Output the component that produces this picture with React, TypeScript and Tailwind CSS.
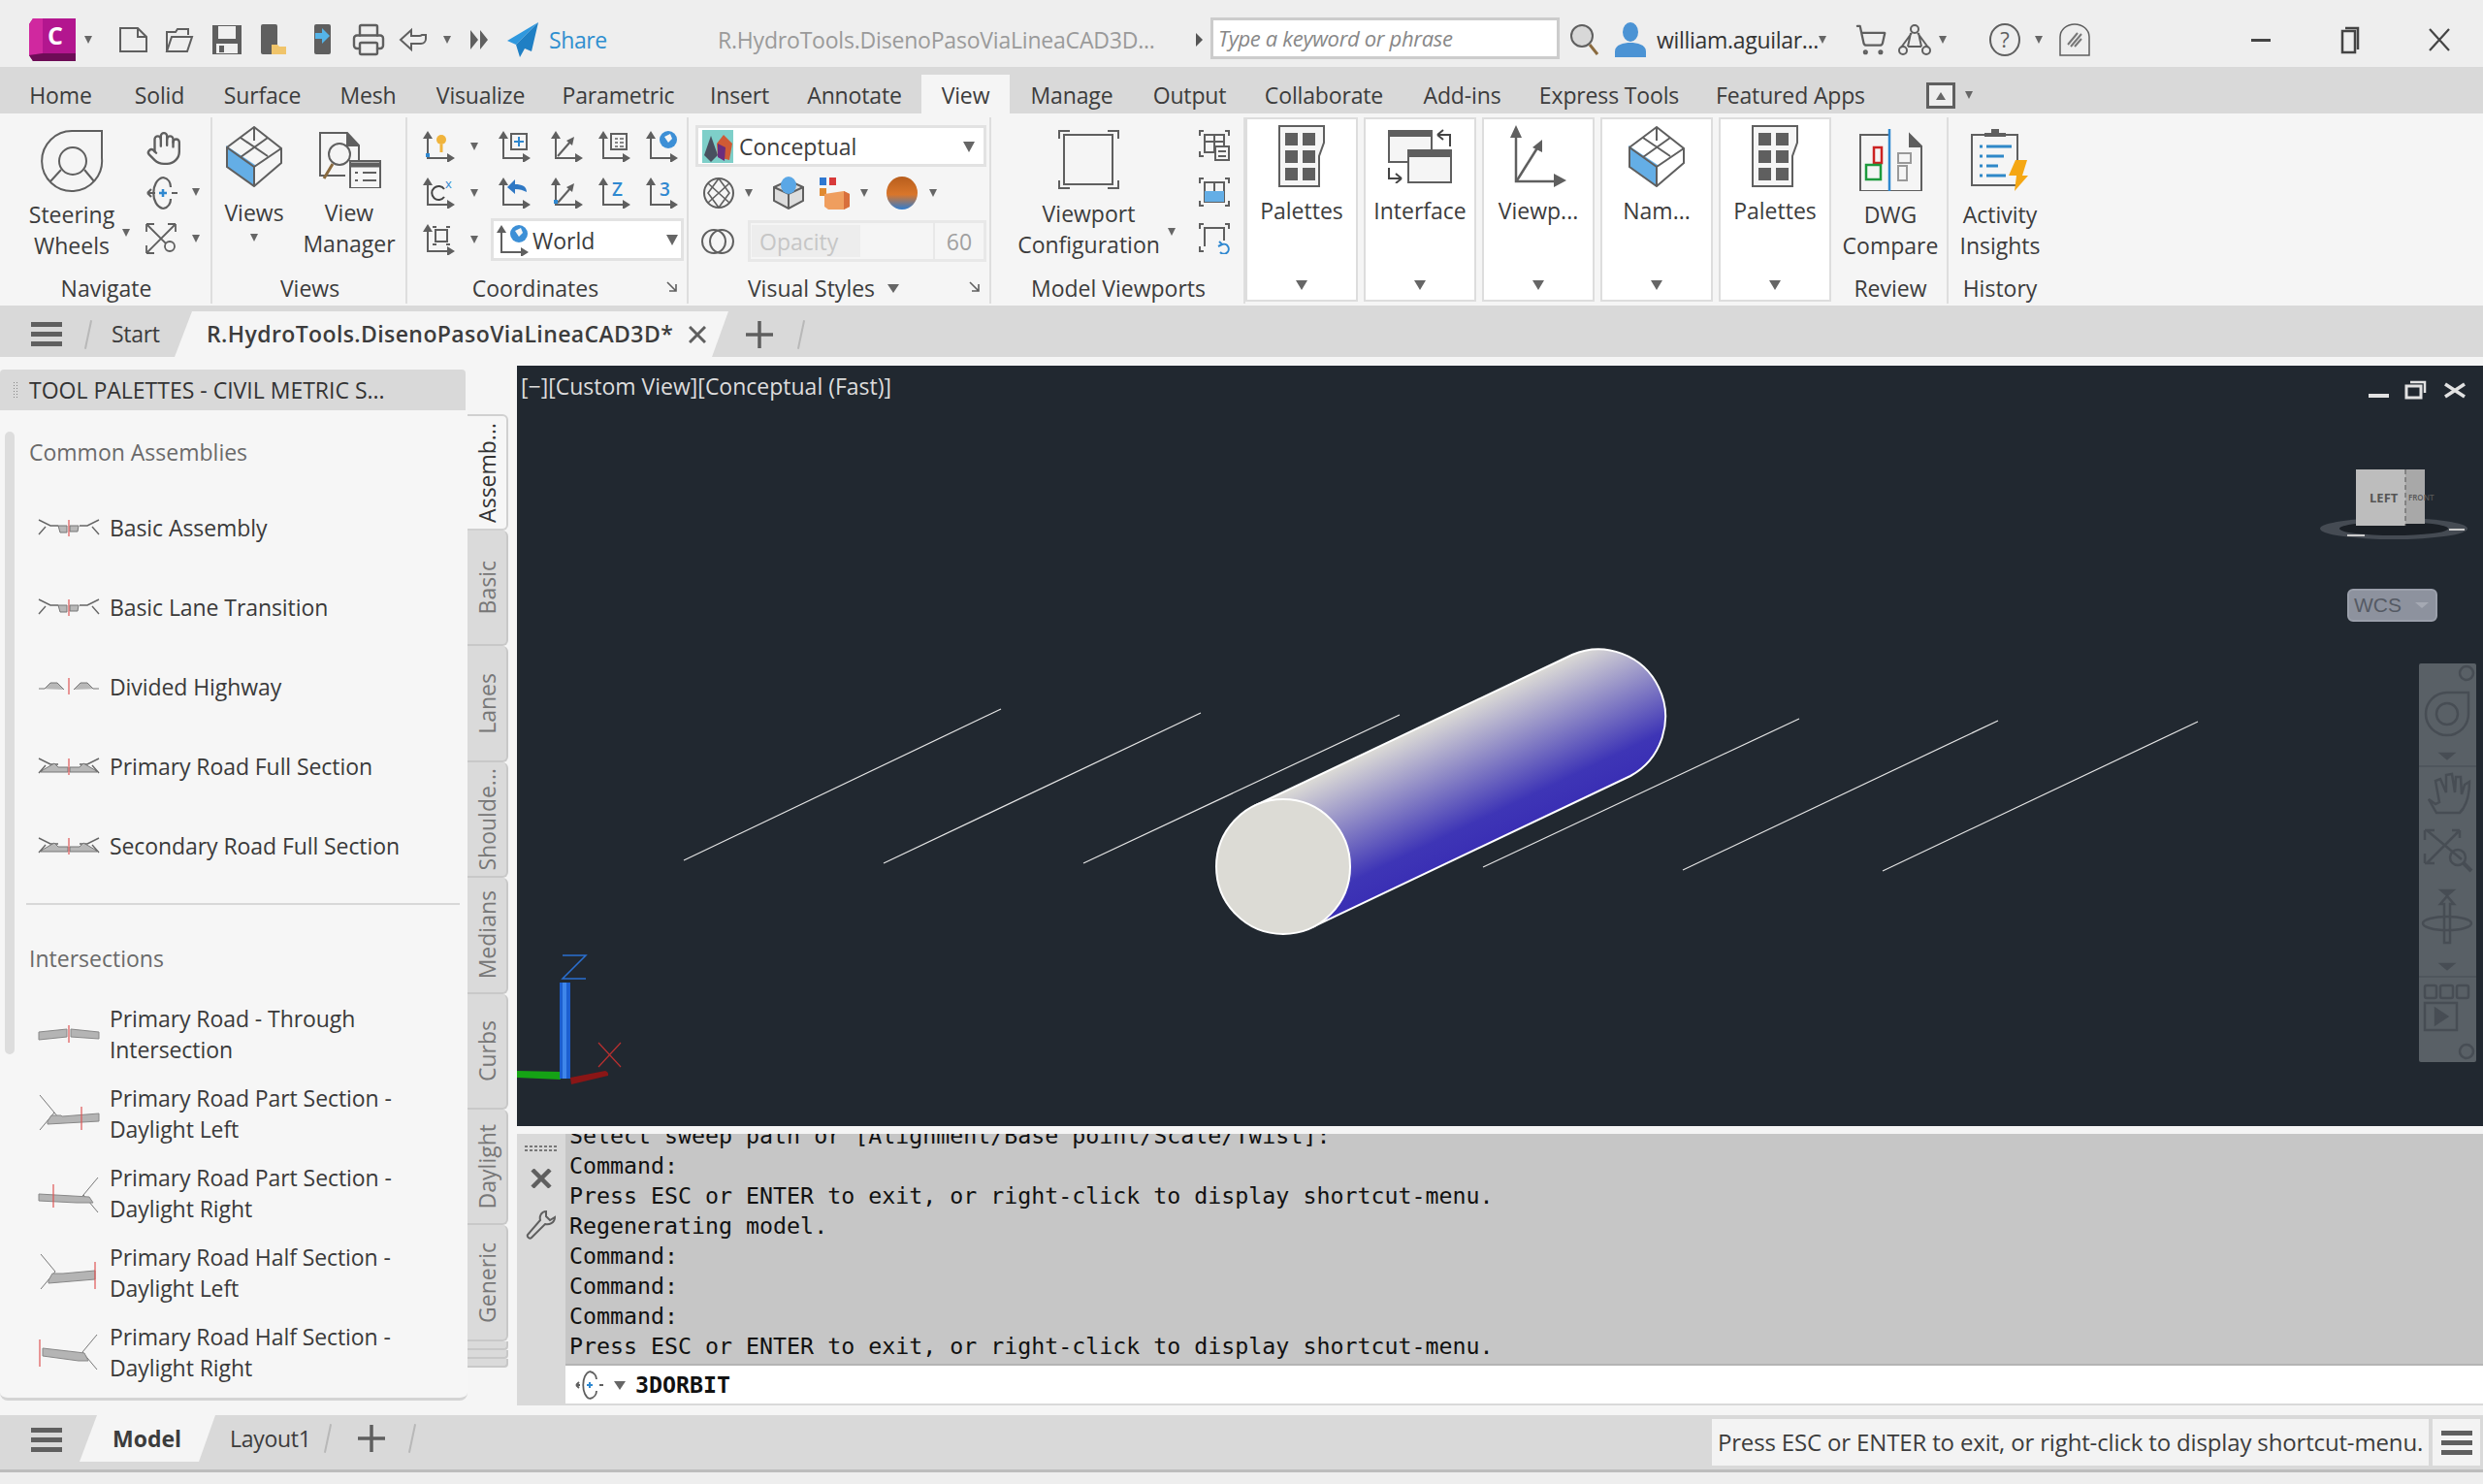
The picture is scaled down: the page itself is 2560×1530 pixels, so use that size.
import React from 'react';
import { Hand, ShoppingCart, Printer } from 'lucide-react';

const G = '#5f5f5f';

const Svg = ({ w, h, children }: { w: number; h: number; children?: React.ReactNode }) => (
  <svg width={w} height={h} viewBox={`0 0 ${w} ${h}`} fill="none" stroke={G} strokeWidth={2} className="shrink-0">
    {children}
  </svg>
);

const Caret = ({ className = '' }: { className?: string }) => (
  <div className={`w-0 h-0 shrink-0 border-x-[4px] border-t-[8px] border-x-transparent border-t-[#666666] ${className}`} />
);

const Burger = () => (
  <div className="w-[32px] flex flex-col gap-[5px] shrink-0">
    <div className="h-[5px] bg-[#5f5f5f]" />
    <div className="h-[5px] bg-[#5f5f5f]" />
    <div className="h-[5px] bg-[#5f5f5f]" />
  </div>
);

const Slash = ({ className = '' }: { className?: string }) => (
  <div className={`w-[2px] h-[30px] rotate-[12deg] bg-[#b8b8b8] shrink-0 ${className}`} />
);

const PlusSign = ({ className = '' }: { className?: string }) => (
  <svg width="30" height="30" viewBox="0 0 30 30" className={`shrink-0 ${className}`}>
    <path d="M15 1v28M1 15h28" stroke={G} strokeWidth="3.5" />
  </svg>
);

// title bar
const Logo = () => (
  <svg width="48" height="44" viewBox="0 0 48 44" className="shrink-0">
    <polygon points="4,0 48,0 48,44 4,44 0,38 0,6" fill="#b3168f" />
    <polygon points="0,6 4,0 14,0 14,36 0,38" fill="#d0289f" />
    <polygon points="0,38 14,36 48,36 48,44 4,44" fill="#6d0c56" />
    <text x="19" y="27" fontFamily="Open Sans" fontWeight="700" fontSize="25" fill="#ffffff">C</text>
  </svg>
);
const NewFile = () => (
  <Svg w={33} h={28}><path d="M3 2h18l9 9v15H3z" /><path d="M21 2v9h9" /></Svg>
);
const OpenFile = () => (
  <Svg w={30} h={28}><path d="M2 26V6h9l2-3h11v6" /><path d="M2 26l5-15h21l-5 15z" /></Svg>
);
const SaveIcon = () => (
  <svg width="32" height="32" viewBox="0 0 32 32" className="shrink-0">
    <path d="M1 1h30v30H1z" fill="#5f5f5f" />
    <rect x="7" y="2" width="18" height="13" fill="#f0f0f0" />
    <rect x="5" y="20" width="22" height="10" fill="#f0f0f0" />
    <rect x="8" y="22" width="5" height="7" fill="#5f5f5f" />
  </svg>
);
const Phone = ({ blue }: { blue?: boolean }) => (
  <svg width="30" height="32" viewBox="0 0 30 32" className="shrink-0">
    <rect x="2" y="0" width="17" height="31" rx="2" fill="#5f5f5f" />
    {blue ? (
      <path d="M3 9h7V4l8 8-8 8v-5H3z" fill="#55b4e8" />
    ) : (
      <path d="M13 21h6l2 2h7v8H13z" fill="#f0c46a" />
    )}
  </svg>
);
const Undo = () => (
  <Svg w={33} h={26}><path d="M14 3L3 13l11 10v-6h10a5 5 0 0 0 5-5V8h-4a4 4 0 0 1-3 1h-8z" /></Svg>
);
const Redo = () => (
  <svg width="20" height="22" viewBox="0 0 20 22" className="shrink-0">
    <path d="M1 1l8 10-8 10zM11 1l8 10-8 10z" fill="#5f5f5f" />
  </svg>
);
const ShareIcon = () => (
  <svg width="33" height="36" viewBox="0 0 33 36" className="shrink-0">
    <path d="M32 0L0 19l9 4z" fill="#2f98de" />
    <path d="M32 0L9 23l4 13 5-9 7 3z" fill="#1f7fc4" />
  </svg>
);
const SearchIcon = () => (
  <svg width="30" height="34" viewBox="0 0 30 34" fill="none" className="shrink-0">
    <circle cx="12" cy="13" r="11" fill="#d8d8d8" stroke={G} strokeWidth="2" />
    <path d="M20 22l8 10" stroke="#8a6a3e" strokeWidth="3" />
  </svg>
);
const UserIcon = () => (
  <svg width="34" height="36" viewBox="0 0 34 36" className="shrink-0">
    <ellipse cx="17" cy="10" rx="8" ry="10" fill="#4b93d4" />
    <path d="M1 36v-6c0-7 9-9 16-9s16 2 16 9v6z" fill="#4b93d4" />
  </svg>
);
const AutodeskA = () => (
  <Svg w={36} h={34}>
    <circle cx="18" cy="6" r="4" />
    <path d="M15 10L4 25M21 10l11 15M11 24h14M14 10l-3 14M22 10l3 14" />
    <circle cx="6" cy="28" r="4" />
    <circle cx="30" cy="28" r="4" />
  </Svg>
);
const HelpIcon = () => (
  <svg width="32" height="34" viewBox="0 0 32 34" fill="none" className="shrink-0">
    <ellipse cx="16" cy="17" rx="15" ry="16" stroke={G} strokeWidth="2" />
    <text x="16" y="25" textAnchor="middle" fontFamily="Open Sans" fontSize="22" fill={G}>?</text>
  </svg>
);
const StayIcon = () => (
  <Svg w={32} h={34}>
    <path d="M1 14a15 13 0 0 1 30 0v19H1z" strokeWidth="1.5" />
    <path d="M9 22l10-12M12 24l11-13M16 24l7-8" stroke="#777777" strokeWidth="2" />
  </Svg>
);

// ribbon large icons
const Wheel = () => (
  <Svg w={65} h={65}>
    <path d="M33 2h30v28A31 31 0 1 1 33 2z" />
    <circle cx="33" cy="33" r="14" />
    <path d="M21 42L10 54M45 42l10 12" />
  </Svg>
);
const Cube = ({ size = 60 }: { size?: number }) => (
  <svg width={size} height={size * 1.05} viewBox="0 0 60 63" fill="none" stroke={G} strokeWidth="2" className="shrink-0">
    <polygon points="1,20 31,40 31,62 1,42" fill="#64aee6" stroke="none" />
    <path d="M30 1L2 22v20l28 20 28-24V23zM30 1v14M2 22l28 20M58 23L30 42v20M16 12l28 19M44 12L16 32" />
  </svg>
);
const ViewManager = () => (
  <Svg w={65} h={58}>
    <path d="M42 36V14L30 1H2v44h26" />
    <path d="M30 1v13h12" fill="#5f5f5f" />
    <circle cx="22" cy="23" r="11" />
    <path d="M15 33L6 48" stroke="#8a6a3e" strokeWidth="3" />
    <rect x="33" y="30" width="31" height="28" fill="#f5f5f5" />
    <path d="M33 34h31" strokeWidth="5" />
    <path d="M38 42h3M46 42h14M38 50h3M46 50h14" />
  </Svg>
);
const Orbit = () => (
  <Svg w={34} h={34}>
    <path d="M18 1C5 4 5 30 18 33M18 1c6 1 8 6 8 10M18 33c6-1 8-6 8-10" strokeWidth="2.2" />
    <path d="M10 17H2m0 0l4-4m-4 4l4 4M27 17h6" strokeWidth="2.2" />
    <path d="M18 13v8M14 17h8" stroke="#2f88d0" strokeWidth="2.5" />
  </Svg>
);
const Viewport = () => (
  <Svg w={63} h={61}>
    <path d="M6 5h50v51H6z" />
    <path d="M12 1H1v8M51 1h11v8M12 60H1v-8M51 60h11v-8" />
  </Svg>
);
const SmallViewportA = () => (
  <Svg w={32} h={32}>
    <path d="M5 1H1v5M27 1h4v5M5 27H1v-5" />
    <rect x="6" y="5" width="20" height="18" />
    <path d="M16 5v18M6 12h20" />
    <rect x="17" y="17" width="14" height="14" fill="#f5f5f5" />
    <path d="M20 22h8M20 27h8" />
  </Svg>
);
const SmallViewportB = () => (
  <Svg w={32} h={30}>
    <path d="M5 1H1v5M27 1h4v5M5 29H1v-5M27 29h4v-5" />
    <rect x="6" y="5" width="20" height="20" />
    <rect x="17" y="14" width="9" height="11" fill="#64aee6" stroke="none" />
    <rect x="6" y="14" width="11" height="11" fill="#64aee6" stroke="none" />
    <path d="M16 5v9" />
  </Svg>
);
const SmallViewportC = () => (
  <Svg w={32} h={32}>
    <path d="M5 1H1v5M27 1h4v5M5 29H1v-5" />
    <path d="M6 24V5h20v13" />
    <path d="M24 22a5 5 0 1 1-2 8M24 22l-3-3M24 22l-4 2" stroke="#2f88d0" />
  </Svg>
);
const Palettes = () => (
  <svg width="48" height="64" viewBox="0 0 48 64" className="shrink-0">
    <path d="M1 1h46v17l-5 14v31H1z" fill="#f5f5f5" stroke={G} strokeWidth="2" />
    <path d="M7 8h13v13H7zM25 8h13v13H25zM7 26h13v13H7zM25 26h13v13H25zM7 44h13v13H7zM25 44h13v13H25z" fill="#5f5f5f" />
  </svg>
);
const InterfaceIcon = () => (
  <Svg w={66} h={56}>
    <rect x="1" y="2" width="44" height="32" fill="#f5f5f5" />
    <path d="M1 5h44" strokeWidth="6" />
    <rect x="21" y="22" width="44" height="33" fill="#f5f5f5" />
    <path d="M21 26h44" strokeWidth="6" />
    <path d="M64 18V6H51M51 6l6-5M51 6l6 5" stroke="#444444" />
    <path d="M1 40v11h13M14 51l-6-5M14 51l-6 5" stroke="#444444" />
  </Svg>
);
const ViewpointIcon = () => (
  <svg width="58" height="64" viewBox="0 0 58 64" fill="none" className="shrink-0">
    <path d="M6 10v48h44" stroke={G} strokeWidth="2.5" />
    <path d="M6 0l-6 13h12zM58 57l-13-7v14z" fill={G} />
    <path d="M7 57l22-35" stroke={G} strokeWidth="2.5" />
    <path d="M33 15l-10 8 10 5z" fill={G} />
  </svg>
);
const DwgCompare = () => (
  <Svg w={65} h={64}>
    <path d="M31 6H1v58h63V18L52 6v12h12" />
    <path d="M52 6l12 12H52z" fill="#5f5f5f" />
    <rect x="15" y="19" width="8" height="16" stroke="#cc2222" strokeWidth="2.5" fill="#f5f5f5" />
    <rect x="7" y="37" width="15" height="15" stroke="#1d9a3d" strokeWidth="2.5" fill="#f5f5f5" />
    <rect x="40" y="25" width="13" height="10" stroke="#999999" fill="#f5f5f5" />
    <rect x="40" y="38" width="9" height="15" stroke="#999999" fill="#f5f5f5" />
    <path d="M31 0v64" stroke="#2f88d0" strokeWidth="2.5" />
  </Svg>
);
const ActivityInsights = () => (
  <svg width="60" height="64" viewBox="0 0 60 64" fill="none" className="shrink-0">
    <path d="M1 6h47v52H1z" stroke={G} strokeWidth="2" fill="#f5f5f5" />
    <path d="M14 8V4h7V0h8v4h7v4z" fill={G} />
    <path d="M9 18h3M16 18h26M9 28h3M16 28h18M9 38h3M16 38h12M9 48h3M16 48h20" stroke="#2f88c8" strokeWidth="3" />
    <path d="M46 32h12l-5 16h6L45 64l2-16h-8z" fill="#f5a713" />
  </svg>
);

// small ucs icons, all share the two axes
const Ucs = ({ children }: { children?: React.ReactNode }) => (
  <svg width="36" height="32" viewBox="0 0 36 32" fill="none" className="shrink-0">
    <path d="M6 6v22h20" stroke={G} strokeWidth="2" />
    <path d="M6 0L1 8h10zM34 28l-8-5v10z" fill={G} />
    {children}
  </svg>
);
const Sq = () => <rect x="14" y="3" width="16" height="16" stroke={G} strokeWidth="2" fill="#f5f5f5" />;

const coordIcons = [
  <Ucs key="a"><circle cx="20" cy="9" r="5" fill="#f0b43c" /><path d="M20 14v8" stroke="#f0b43c" strokeWidth="3" /><rect x="4" y="23" width="4" height="4" fill="#2f88d0" /></Ucs>,
  <Ucs key="b"><Sq /><path d="M22 6v10M17 11h10" stroke="#2f88d0" strokeWidth="2" /></Ucs>,
  <Ucs key="c"><path d="M8 26L22 10" stroke={G} strokeWidth="2" /><path d="M25 6l-8 4 6 5z" fill={G} /></Ucs>,
  <Ucs key="d"><Sq /><path d="M18 8h3M23 8h4M18 12h3M23 12h4M18 16h3M23 16h4" stroke={G} strokeWidth="1.5" /></Ucs>,
  <Ucs key="e"><circle cx="24" cy="9" r="9" fill="#3c8fd6" /><path d="M20 6l6-3 2 5-4 4z" fill="#f5f5f5" /></Ucs>,
  <Ucs key="f"><path d="M23 12a7 7 0 1 0 0 8" stroke="#444444" strokeWidth="2" /><text x="24" y="11" fontFamily="Open Sans" fontSize="13" fill="#2f88d0">x</text></Ucs>,
  <Ucs key="g"><path d="M30 15c0-6-5-8-12-8V2l-8 8 8 7v-5c5 0 8 1 12 3z" fill="#2f78c4" /></Ucs>,
  <Ucs key="h"><path d="M8 26L22 10" stroke={G} strokeWidth="2" /><path d="M25 6l-8 4 6 5z" fill={G} /><rect x="4" y="23" width="4" height="4" fill="#2f88d0" /></Ucs>,
  <Ucs key="i"><text x="15" y="19" fontFamily="Open Sans" fontSize="19" fontWeight="600" fill="#2f88d0">Z</text></Ucs>,
  <Ucs key="j"><text x="15" y="19" fontFamily="Open Sans" fontSize="19" fontWeight="600" fill="#2f88d0">3</text></Ucs>,
  <Ucs key="k"><rect x="14" y="6" width="12" height="12" stroke={G} strokeWidth="2" /><path d="M11 3h4M25 3h4M11 21h4M25 21h4" stroke={G} strokeWidth="2" /></Ucs>,
];

// road assembly pictures for the palette
const RoadBasic = ({ full }: { full?: boolean }) => (
  <svg width="64" height="20" viewBox="0 0 64 20" fill="none" className="shrink-0">
    <path d="M1 2l12 6h8M63 2L51 8h-8M1 17L8 9M63 17l-7-8" stroke="#666666" strokeWidth="1.4" />
    {full ? (
      <path d="M5 14l12-7 4 4 10 0v5H3zM59 14L47 7l-4 4-10 0v5h28z" fill="#b8b8b8" stroke="#777777" strokeWidth="1" />
    ) : (
      <path d="M21 8h9v7h-7zM33 8h9l-1 6h-8z" fill="#b8b8b8" stroke="#777777" strokeWidth="1" />
    )}
    <path d="M32 2v17" stroke="#e05555" strokeWidth="1.2" />
  </svg>
);
const RoadDivided = () => (
  <svg width="64" height="20" viewBox="0 0 64 20" fill="none" className="shrink-0">
    <path d="M1 12h6l6-6h7l7 7M37 13l7-7h7l6 6h6" stroke="#777777" strokeWidth="1" fill="#b8b8b8" />
    <path d="M32 1v17" stroke="#e05555" strokeWidth="1.2" />
  </svg>
);
const RoadWide = ({ kind }: { kind: string }) => {
  const slab = '#b4b4b4';
  return (
    <svg width="64" height="44" viewBox="0 0 64 44" fill="none" className="shrink-0">
      {kind === 'through' && (
        <>
          <path d="M1 20l29-3v8l-29 3zM34 17l29 3v7l-29-2z" fill={slab} stroke="#888888" />
          <path d="M32 13v18" stroke="#e05555" strokeWidth="1.2" />
        </>
      )}
      {kind === 'partLeft' && (
        <>
          <path d="M2 3l15 18M17 21L2 39M17 21l5 6" stroke="#777777" />
          <path d="M10 30l4-6h10l1 1 38-3v8l-53 3z" fill={slab} stroke="#888888" />
          <path d="M45 15v24" stroke="#e05555" strokeWidth="1.2" />
        </>
      )}
      {kind === 'partRight' && (
        <>
          <path d="M62 6L47 24M47 24l15 18M47 24l-5 6" stroke="#777777" />
          <path d="M1 23l52 3 4 6H40l-39-2z" fill={slab} stroke="#888888" />
          <path d="M16 13v24" stroke="#e05555" strokeWidth="1.2" />
        </>
      )}
      {kind === 'halfLeft' && (
        <>
          <path d="M3 3l15 18M18 21L3 39" stroke="#777777" />
          <path d="M11 30l4-7h11l33-3v9l-48 4z" fill={slab} stroke="#888888" />
          <path d="M59 11v28" stroke="#e05555" strokeWidth="1.2" />
        </>
      )}
      {kind === 'halfRight' && (
        <>
          <path d="M61 4L46 22M46 22l15 18" stroke="#777777" />
          <path d="M5 18l35 4 8 1 4 8-10 0-37-5z" fill={slab} stroke="#888888" />
          <path d="M2 9v28" stroke="#e05555" strokeWidth="1.2" />
        </>
      )}
    </svg>
  );
};

const tabs = [
  { label: 'Home', width: 'w-[111px]' },
  { label: 'Solid', width: 'w-[93px]' },
  { label: 'Surface', width: 'w-[119px]' },
  { label: 'Mesh', width: 'w-[99px]' },
  { label: 'Visualize', width: 'w-[133px]' },
  { label: 'Parametric', width: 'w-[151px]' },
  { label: 'Insert', width: 'w-[99px]' },
  { label: 'Annotate', width: 'w-[138px]' },
  { label: 'View', width: 'w-[91px]' },
  { label: 'Manage', width: 'w-[128px]' },
  { label: 'Output', width: 'w-[115px]' },
  { label: 'Collaborate', width: 'w-[162px]' },
  { label: 'Add-ins', width: 'w-[123px]' },
  { label: 'Express Tools', width: 'w-[180px]' },
  { label: 'Featured Apps', width: 'w-[194px]' },
];
const sideTabs = ['Basic', 'Lanes', 'Shoulde...', 'Medians', 'Curbs', 'Daylight', 'Generic'];
const commandLines = [
  'Select sweep path or [Alignment/Base point/Scale/Twist]:',
  'Command:',
  'Press ESC or ENTER to exit, or right-click to display shortcut-menu.',
  'Regenerating model.',
  'Command:',
  'Command:',
  'Command:',
  'Press ESC or ENTER to exit, or right-click to display shortcut-menu.',
];

const TitleBar = () => (
  <div className="h-[69px] bg-[#eeeeee] flex items-center pt-[13px] pl-[30px] shrink-0 whitespace-nowrap">
    <Logo />
    <Caret className="ml-[9px]" />
    <div className="ml-[26px]"><NewFile /></div>
    <div className="ml-[16px]"><OpenFile /></div>
    <div className="ml-[18px]"><SaveIcon /></div>
    <div className="ml-[17px]"><Phone /></div>
    <div className="ml-[25px]"><Phone blue /></div>
    <Printer size={36} strokeWidth={1.6} color={G} className="ml-[10px] shrink-0" />
    <div className="ml-[12px]"><Undo /></div>
    <Caret className="ml-[14px]" />
    <div className="ml-[19px]"><Redo /></div>
    <div className="ml-[19px]"><ShareIcon /></div>
    <span className="ml-[10px] w-[58px] text-[23px] text-[#2f8fd0] tracking-[-0.4px]">Share</span>
    <span className="ml-[116px] w-[452px] text-[23px] text-[#9a9a9a] tracking-[-0.2px]">R.HydroTools.DisenoPasoViaLineaCAD3D...</span>
    <div className="ml-[41px] w-0 h-0 border-y-[7px] border-l-[7px] border-y-transparent border-l-[#555555]" />
    <div className="ml-[8px] -mt-[3px] w-[360px] h-[43px] bg-white border-[3px] border-[#cccccc] flex items-center pl-[5px] text-[22px] italic text-[#888888] tracking-[-0.33px]">
      Type a keyword or phrase
    </div>
    <div className="ml-[11px]"><SearchIcon /></div>
    <div className="ml-[15px]"><UserIcon /></div>
    <span className="ml-[10px] w-[167px] text-[23px] text-[#333333] tracking-[-0.3px]">william.aguilar...</span>
    <Caret className="w-[8px]" />
    <ShoppingCart size={34} strokeWidth={1.6} color={G} className="ml-[29px] shrink-0" />
    <div className="ml-[10px]"><AutodeskA /></div>
    <Caret className="ml-[7px]" />
    <div className="ml-[44px]"><HelpIcon /></div>
    <Caret className="ml-[15px]" />
    <div className="ml-[17px]"><StayIcon /></div>
    <div className="ml-[166px] w-[20px] h-[3px] bg-[#444444]" />
    <svg width="20" height="30" viewBox="0 0 20 30" fill="none" className="ml-[72px] shrink-0">
      <path d="M5 3h13v22" stroke="#444444" strokeWidth="2.5" />
      <rect x="2" y="6" width="13" height="22" stroke="#444444" strokeWidth="2.5" />
    </svg>
    <svg width="22" height="24" viewBox="0 0 22 24" className="ml-[71px] shrink-0">
      <path d="M1 1l20 22M21 1L1 23" stroke="#444444" strokeWidth="2.2" />
    </svg>
  </div>
);

const TabBar = () => (
  <div className="h-[48px] bg-[#d9d9d9] flex items-end pl-[7px] shrink-0 text-[23px] text-[#3c3c3c] tracking-[-0.15px] whitespace-nowrap">
    {tabs.map((t) => (
      <div key={t.label} className={`${t.width} h-[40px] pt-[3px] flex items-center ${t.label === 'Featured Apps' ? 'pl-[20px]' : 'justify-center'} ${t.label === 'View' ? 'bg-[#f5f5f5]' : ''}`}>
        {t.label}
      </div>
    ))}
    <div className="ml-[43px] mb-[5px] w-[30px] h-[27px] border-[3px] border-[#5f5f5f] bg-[#eeeeee] flex items-center justify-center">
      <div className="w-0 h-0 border-x-[5px] border-b-[8px] border-x-transparent border-b-[#666666]" />
    </div>
    <Caret className="ml-[10px] mb-[15px]" />
  </div>
);

const Group = ({ width, label, extra, children }: { width: string; label?: React.ReactNode; extra?: React.ReactNode; children: React.ReactNode }) => (
  <div className={`${width} shrink-0 flex flex-col relative`}>
    <div className="flex-1 min-h-0">{children}</div>
    <div className="h-[36px] flex items-center justify-center gap-[16px]">{label}</div>
    {extra}
    <div className="absolute right-0 top-[4px] bottom-[2px] w-[2px] bg-[#dedede]" />
  </div>
);

const Launcher = ({ className = '' }: { className?: string }) => (
  <svg width="12" height="12" viewBox="0 0 12 12" fill="none" className={`absolute bottom-[13px] ${className}`}>
    <path d="M1 1l9 9M10 3v7H3" stroke={G} strokeWidth="1.6" />
  </svg>
);

const SmallTool = ({ icon, caret, className = '' }: { icon: React.ReactNode; caret?: boolean; className?: string }) => (
  <div className={`h-[48px] flex items-start gap-[14px] ${className}`}>
    {icon}
    {caret && <Caret className="mt-[12px]" />}
  </div>
);

const PanelButton = ({ icon, label }: { icon: React.ReactNode; label: string }) => (
  <div className="w-[116px] h-[190px] bg-white border-2 border-[#dddddd] flex flex-col items-center">
    <div className="h-[64px] mt-[6px] flex items-center">{icon}</div>
    <div className="mt-[8px] leading-[32px]">{label}</div>
    <Caret className="mt-auto mb-[10px] border-x-[6px] border-t-[10px]" />
  </div>
);

const Ribbon = () => (
  <div className="h-[198px] bg-[#f5f5f5] flex shrink-0 text-[23px] leading-[32px] text-[#3c3c3c] whitespace-nowrap">
    <Group width="w-[219px]" label="Navigate">
      <div className="flex pt-[16px] pl-[18px]">
        <div className="w-[112px] flex flex-col items-center">
          <Wheel />
          <div className="mt-[7px] text-center">Steering<br />Wheels</div>
        </div>
        <Caret className="mt-[103px] -ml-[4px]" />
        <div className="ml-[16px] pt-[1px]">
          <SmallTool icon={<Hand size={38} strokeWidth={1.5} color={G} />} />
          <SmallTool caret icon={<Orbit />} />
          <SmallTool caret icon={
            <Svg w={34} h={32}>
              <path d="M2 2l26 26M30 2L2 30" strokeWidth="1.8" />
              <path d="M1 1h8M1 1v8M31 1h-8M31 1v8M1 31h8M1 31v-8" strokeWidth="1.8" />
              <circle cx="25" cy="24" r="5" fill="#f5f5f5" strokeWidth="1.8" />
            </Svg>
          } />
        </div>
      </div>
    </Group>
    <Group width="w-[201px]" label="Views">
      <div className="flex pt-[13px] pl-[13px]">
        <div className="w-[60px] flex flex-col items-center">
          <Cube />
          <div className="mt-[10px] leading-[32px]">Views</div>
          <Caret className="mt-[6px]" />
        </div>
        <div className="w-[112px] ml-[11px] flex flex-col items-center pl-[2px] pt-[6px]">
          <ViewManager />
          <div className="mt-[9px] text-center">View<br />Manager</div>
        </div>
      </div>
    </Group>
    <Group
      width="w-[290px]"
      label={<span className="-ml-[26px]">Coordinates</span>}
      extra={<Launcher className="right-[11px]" />}
    >
      <div className="pt-[18px] pl-[15px] grid grid-cols-[78px_54px_49px_49px_36px] grid-rows-[48px_48px_48px]">
        <SmallTool caret icon={coordIcons[0]} />
        {coordIcons.slice(1, 5)}
        <SmallTool caret icon={coordIcons[5]} />
        {coordIcons.slice(6, 10)}
        <SmallTool caret icon={coordIcons[10]} />
        <div className="col-span-4 -ml-[7px] -mt-[6px] w-[199px] h-[44px] bg-white border-[3px] border-[#e2e2e2] flex items-center pl-[2px] pt-[1px]">
          <Ucs><circle cx="24" cy="9" r="9" fill="#3c8fd6" /><path d="M20 6l6-3 2 5-4 4z" fill="#f5f5f5" /></Ucs>
          <span className="ml-[2px]">World</span>
          <Caret className="ml-auto mr-[3px] border-x-[6px] border-t-[11px]" />
        </div>
      </div>
    </Group>
    <Group
      width="w-[312px]"
      label={<span className="flex items-center gap-[13px] -ml-[34px]">Visual Styles<Caret className="border-x-[6px] border-t-[9px]" /></span>}
      extra={<Launcher className="right-[11px]" />}
    >
      <div className="pt-[12px] pl-[7px]">
        <div className="w-[300px] h-[43px] bg-white border-[3px] border-[#e2e2e2] flex items-center pl-[4px] pt-[1px]">
          <svg width="32" height="34" viewBox="0 0 32 34" className="shrink-0">
            <rect width="32" height="34" fill="#7ecfc9" />
            <path d="M9 6l7 20-7 7-7-7z" fill="#48505f" />
            <path d="M22 5l9 9-3 17-12-3-1-14z" fill="#cf5a35" />
            <path d="M16 14l8 4-1 14-7-4z" fill="#6b2d7d" />
          </svg>
          <span className="ml-[6px]">Conceptual</span>
          <Caret className="ml-auto mr-[9px] border-x-[6px] border-t-[11px]" />
        </div>
        <div className="mt-[11px] h-[32px] flex items-center">
          <div className="ml-[7px]">
            <Svg w={34} h={32}>
              <circle cx="17" cy="16" r="15" />
              <path d="M6 6l22 20M28 6L6 26M17 1l-11 15 11 15 11-15z" strokeWidth="1.6" />
            </Svg>
          </div>
          <Caret className="ml-[10px]" />
          <svg width="34" height="34" viewBox="0 0 34 34" className="ml-[20px] shrink-0">
            <path d="M2 11l15-7 15 7v14l-15 8-15-8z" fill="#dddddd" stroke={G} strokeWidth="2" />
            <path d="M2 11l15 7 15-7M17 18v15" stroke={G} strokeWidth="2" fill="none" />
            <ellipse cx="17" cy="9" rx="8" ry="9" fill="#5aa7e6" />
          </svg>
          <svg width="34" height="34" viewBox="0 0 34 34" className="ml-[14px] shrink-0">
            <rect x="1" y="1" width="7" height="8" fill="#2f78d0" />
            <rect x="11" y="1" width="7" height="8" fill="#d83a3a" />
            <rect x="1" y="12" width="7" height="8" fill="#e08a30" />
            <path d="M6 18l20-3 6 3v13l-6 3H10l-4-3z" fill="#ef9e5e" />
            <path d="M26 15l6 3v13l-6 3z" fill="#d86f3c" />
          </svg>
          <Caret className="ml-[9px]" />
          <svg width="34" height="34" viewBox="0 0 34 34" className="ml-[18px] shrink-0">
            <defs>
              <linearGradient id="ball" x1="0" y1="0" x2="0" y2="1">
                <stop offset="0" stopColor="#b85e1d" />
                <stop offset="0.55" stopColor="#d9762b" />
                <stop offset="1" stopColor="#2f7ccf" />
              </linearGradient>
            </defs>
            <ellipse cx="17" cy="17" rx="16" ry="17" fill="url(#ball)" />
          </svg>
          <Caret className="ml-[11px]" />
        </div>
        <div className="mt-[12px] flex items-center">
          <div className="ml-[6px]">
            <Svg w={34} h={32}>
              <circle cx="13" cy="16" r="12" />
              <circle cx="21" cy="16" r="12" />
            </Svg>
          </div>
          <div className="ml-[14px] w-[246px] h-[43px] border-[3px] border-[#e8e8e8] flex items-center">
            <div className="ml-[1px] w-[112px] h-[33px] bg-[#ededed] flex items-center pl-[8px] text-[#c6c6c6]">Opacity</div>
            <div className="ml-auto w-[52px] h-full border-l-[2px] border-[#e8e8e8] flex items-center justify-center text-[#a0a0a0]">60</div>
          </div>
        </div>
      </div>
    </Group>
    <Group width="w-[262px]" label="Model Viewports">
      <div className="flex pt-[17px] pl-[13px]">
        <div className="w-[175px] flex flex-col items-center">
          <Viewport />
          <div className="mt-[9px] text-center">Viewport<br />Configuration</div>
        </div>
        <Caret className="mt-[101px] -ml-[6px]" />
        <div className="ml-[24px] flex flex-col gap-[17px]">
          <SmallViewportA />
          <SmallViewportB />
          <SmallViewportC />
        </div>
      </div>
    </Group>
    <div className="w-[605px] shrink-0 pt-[4px] flex gap-[6px]">
      <PanelButton icon={<Palettes />} label="Palettes" />
      <PanelButton icon={<InterfaceIcon />} label="Interface" />
      <PanelButton icon={<ViewpointIcon />} label="Viewp..." />
      <PanelButton icon={<Cube size={60} />} label="Nam..." />
      <PanelButton icon={<Palettes />} label="Palettes" />
    </div>
    <Group width="w-[120px]" label="Review">
      <div className="pt-[16px] flex flex-col items-center">
        <DwgCompare />
        <div className="mt-[8px] text-center">DWG<br />Compare</div>
      </div>
    </Group>
    <div className="w-[106px] flex flex-col shrink-0">
      <div className="flex-1 pt-[16px] flex flex-col items-center">
        <ActivityInsights />
        <div className="mt-[8px] text-center">Activity<br />Insights</div>
      </div>
      <div className="h-[36px] flex items-center justify-center">History</div>
    </div>
  </div>
);

const DocBar = () => (
  <div className="h-[53px] bg-[#d9d9d9] flex items-center pl-[32px] pt-[6px] shrink-0 text-[23px] text-[#3c3c3c] whitespace-nowrap">
    <Burger />
    <Slash className="ml-[26px]" />
    <span className="ml-[23px] w-[50px] tracking-[-0.3px]">Start</span>
    <div className="ml-[15px] self-end h-[47px] w-[571px] bg-[#f5f5f5] [clip-path:polygon(18px_0,100%_0,calc(100%_-_17px)_100%,0_100%)] flex items-center pl-[33px]">
      <span className="w-[481px] font-semibold tracking-[0.4px]">R.HydroTools.DisenoPasoViaLineaCAD3D*</span>
      <svg width="18" height="18" viewBox="0 0 18 18" className="ml-[16px] shrink-0">
        <path d="M1 1l16 16M17 1L1 17" stroke={G} strokeWidth="3" />
      </svg>
    </div>
    <PlusSign className="ml-[17px]" />
    <Slash className="ml-[27px]" />
  </div>
);

const PaletteRow = ({ icon, children }: { icon: React.ReactNode; children: React.ReactNode }) => (
  <div className="h-[82px] flex items-center">
    <div className="w-[64px] ml-[9px] flex justify-center shrink-0">{icon}</div>
    <div className="ml-[10px] leading-[32px] text-[#3a3a3a] tracking-[-0.08px]">{children}</div>
  </div>
);

const ToolPalette = () => (
  <div className="w-[533px] shrink-0 pt-[13px] text-[23px] whitespace-nowrap">
    <div className="w-[480px] h-[42px] bg-[#d9d9d9] rounded-t-[4px] flex items-center pl-[13px] text-[#333333]">
      <div className="w-[6px] h-[18px] mr-[11px] [background-image:radial-gradient(#888888_1px,transparent_1px)] [background-size:3px_3px]" />
      TOOL PALETTES - CIVIL METRIC S...
    </div>
    <div className="flex">
      <div className="w-[482px] h-[1021px] bg-[#f6f6f6] border-b-[3px] border-[#d4d4d4] rounded-b-[8px] flex">
        <div className="ml-[5px] mt-[22px] w-[10px] h-[642px] bg-[#dddddd] rounded-[5px] shrink-0" />
        <div className="flex-1 ml-[15px] mr-[8px]">
          <div className="mt-[27px] h-[32px] leading-[32px] text-[#6a6a6a]">Common Assemblies</div>
          <div className="mt-[21px]">
            <PaletteRow icon={<RoadBasic />}>Basic Assembly</PaletteRow>
            <PaletteRow icon={<RoadBasic />}>Basic Lane Transition</PaletteRow>
            <PaletteRow icon={<RoadDivided />}>Divided Highway</PaletteRow>
            <PaletteRow icon={<RoadBasic full />}>Primary Road Full Section</PaletteRow>
            <PaletteRow icon={<RoadBasic full />}>Secondary Road Full Section</PaletteRow>
          </div>
          <div className="mt-[18px] h-[2px] bg-[#d8d8d8] -ml-[3px]" />
          <div className="mt-[39px] h-[32px] leading-[32px] text-[#6a6a6a]">Intersections</div>
          <div className="mt-[21px]">
            <PaletteRow icon={<RoadWide kind="through" />}>Primary Road - Through<br />Intersection</PaletteRow>
            <PaletteRow icon={<RoadWide kind="partLeft" />}>Primary Road Part Section -<br />Daylight Left</PaletteRow>
            <PaletteRow icon={<RoadWide kind="partRight" />}>Primary Road Part Section -<br />Daylight Right</PaletteRow>
            <PaletteRow icon={<RoadWide kind="halfLeft" />}>Primary Road Half Section -<br />Daylight Left</PaletteRow>
            <PaletteRow icon={<RoadWide kind="halfRight" />}>Primary Road Half Section -<br />Daylight Right</PaletteRow>
          </div>
        </div>
      </div>
      <div className="w-[42px] mt-[4px] shrink-0">
        <div className="h-[120px] bg-[#f6f6f6] border-2 border-l-0 border-[#d0d0d0] rounded-r-[6px] flex items-center justify-center text-[#333333]">
          <span className="[writing-mode:vertical-rl] rotate-180">Assemb...</span>
        </div>
        {sideTabs.map((t) => (
          <div key={t} className="h-[119.4px] bg-[#dadada] border-2 border-t-0 border-l-0 border-[#c8c8c8] rounded-r-[6px] flex items-center justify-center text-[#777777]">
            <span className="[writing-mode:vertical-rl] rotate-180">{t}</span>
          </div>
        ))}
        <div className="h-[9px] bg-[#dadada] border-2 border-t-0 border-l-0 border-[#c8c8c8] rounded-br-[4px]" />
        <div className="h-[9px] bg-[#dadada] border-2 border-t-0 border-l-0 border-[#c8c8c8] rounded-br-[4px]" />
        <div className="h-[9px] bg-[#dadada] border-2 border-t-0 border-l-0 border-[#c8c8c8] rounded-br-[4px]" />
      </div>
    </div>
  </div>
);

const Scene = () => (
  <svg viewBox="533 377 2027 784" fill="none" className="absolute inset-0 w-full h-full">
    <defs>
      <linearGradient id="cyl" gradientUnits="userSpaceOnUse" x1="1293" y1="831" x2="1353" y2="956">
        <stop offset="0" stopColor="#dddcd6" />
        <stop offset="0.82" stopColor="#3e35b6" />
        <stop offset="1" stopColor="#3a2fb4" />
      </linearGradient>
    </defs>
    <path d="M705 887L1032 731M911 890L1238 735M1117 890L1443 737M1529 894L1855 741M1735 897L2060 743M1941 898L2266 744" stroke="#e4e4e4" strokeWidth="1.2" />
    <path d="M1293 831L1621 675A69 69.5 0 0 1 1681 800L1353 956Z" fill="url(#cyl)" stroke="#ffffff" strokeWidth="2" />
    <ellipse cx="1323" cy="893.5" rx="69" ry="69.5" fill="#dcdbd5" stroke="#ffffff" strokeWidth="2" />
    <path d="M580 985h24l-24 24h24" stroke="#2a6fd0" strokeWidth="1.5" />
    <path d="M533 1104l45 1v8l-45-2z" fill="#15a315" />
    <path d="M588 1111l36-7a4 4 0 0 1 3 5l-38 9z" fill="#8a1616" />
    <rect x="577" y="1013" width="11" height="99" fill="#1c5fd0" />
    <rect x="580" y="1013" width="4" height="99" fill="#3f86ea" />
    <path d="M617 1075l23 25M640 1075l-23 25" stroke="#b83030" strokeWidth="1.2" />
    {/* view cube */}
    <ellipse cx="2468" cy="545" rx="76" ry="11" fill="#454b53" />
    <ellipse cx="2468" cy="545" rx="56" ry="7" fill="#1a1f25" />
    <path d="M2420 552h18M2525 546h16" stroke="#cccccc" strokeWidth="2" />
    <rect x="2429" y="484" width="51" height="58" fill="#bdbdbd" />
    <rect x="2480" y="484" width="20" height="56" fill="#a8a8a8" />
    <path d="M2480 484v58" stroke="#555555" strokeDasharray="5 3" />
    <text x="2443" y="518" fontFamily="Open Sans" fontWeight="700" fontSize="13" fill="#555555">LEFT</text>
    <text x="2483" y="516" fontFamily="Open Sans" fontWeight="600" fontSize="8" fill="#555555">FRONT</text>
  </svg>
);

const NavBar = () => (
  <div className="absolute left-[1961px] top-[307px] w-[59px] h-[411px] bg-[#596066] rounded-[2px]">
    <svg width="59" height="411" viewBox="0 0 59 411" fill="none" stroke="#474d54" strokeWidth="2.5">
      <circle cx="49" cy="10" r="7" />
      <path d="M29 30h22v22a22 22 0 1 1-22-22z" />
      <circle cx="29" cy="52" r="11" />
      <path d="M23 93h12l-6 5z" fill="#474d54" />
      <path d="M0 106h59" strokeWidth="1" />
      <path d="M10 140l8 14h24c8-8 10-20 10-32l-5 3-3 10-1-18-5 0-1 16-3-19-6 1v18l-6-14-5 2 4 22-4 2z" />
      <path d="M8 172l36 30M42 172L8 206M6 172h10M6 172v10M42 172h-8M42 172v8M6 206h10M6 206v-10" />
      <circle cx="40" cy="200" r="8" />
      <path d="M46 206l8 8" strokeWidth="4" />
      <path d="M23 234h12l-6 5z" fill="#474d54" />
      <path d="M22 248l7-8 7 8h-4v40h-6v-40z" />
      <ellipse cx="29" cy="268" rx="25" ry="7" />
      <path d="M23 310h12l-6 5z" fill="#474d54" />
      <path d="M0 323h59" strokeWidth="1" />
      <rect x="6" y="332" width="12" height="13" rx="2" />
      <rect x="22" y="332" width="13" height="13" rx="2" />
      <rect x="39" y="332" width="12" height="13" rx="2" />
      <rect x="6" y="350" width="33" height="28" />
      <path d="M17 356l12 8-12 8z" fill="#474d54" />
      <circle cx="49" cy="400" r="7" />
    </svg>
  </div>
);

const ViewportPane = () => (
  <div className="relative h-[784px] bg-[#212830] overflow-hidden">
    <Scene />
    <div className="absolute left-[4px] top-[5px] text-[23px] leading-[32px] text-[#dddddd] whitespace-nowrap">
      [−][Custom View][Conceptual (Fast)]
    </div>
    <svg width="100" height="24" viewBox="0 0 100 24" fill="none" className="absolute left-[1909px] top-[15px]">
      <path d="M0 16h21" stroke="#e2e2e2" strokeWidth="4" />
      <path d="M43 2h15v11" stroke="#e2e2e2" strokeWidth="2.5" />
      <rect x="39" y="6" width="15" height="12" stroke="#e2e2e2" strokeWidth="3" />
      <path d="M79 4l20 13M99 4L79 17" stroke="#e2e2e2" strokeWidth="3.5" />
    </svg>
    <div className="absolute left-[1887px] top-[230px] w-[93px] h-[34px] bg-[#8d929e] border-2 border-[#9ba0ab] rounded-[6px] flex items-center pl-[5px] text-[21px] text-[#555a64] font-['Liberation_Sans',sans-serif]">
      WCS
      <div className="ml-[14px] w-0 h-0 border-x-[7px] border-t-[6px] border-x-transparent border-t-[#a5a9b3]" />
    </div>
    <NavBar />
  </div>
);

const CommandPane = () => (
  <div className="mt-[8px] h-[280px] flex bg-[#d9d9d9]">
    <div className="w-[50px] shrink-0 flex flex-col items-center pt-[11px]">
      <div className="w-[36px] h-[9px] [background-image:radial-gradient(#777777_1.2px,transparent_1.2px)] [background-size:5px_4px]" />
      <svg width="22" height="20" viewBox="0 0 22 20" className="mt-[16px]">
        <path d="M2 1l18 18M20 1L2 19" stroke={G} strokeWidth="4.5" />
      </svg>
      <svg width="32" height="32" viewBox="0 0 32 32" fill="none" className="mt-[22px]">
        <path d="M21 2c-5 0-7 5-6 9L2 26c-1 2 2 5 4 3l14-14c4 1 10-1 10-7l-5 3-4-4z" stroke={G} strokeWidth="2" />
      </svg>
    </div>
    <div className="flex-1 min-w-0 flex flex-col font-['DejaVu_Sans_Mono',monospace]">
      <div className="h-[239px] bg-[#c6c6c6] border-b-[2px] border-[#b4b4b4] overflow-hidden pl-[4px] text-[23.27px] leading-[31px] text-[#111111] whitespace-pre">
        <div className="-mt-[14px]">
          {commandLines.map((line, i) => (
            <div key={i}>{line}</div>
          ))}
        </div>
      </div>
      <div className="h-[41px] bg-white border-b-[2px] border-[#d9d9d9] flex items-center pl-[9px] pt-[1px]">
        <svg width="32" height="32" viewBox="0 0 32 32" fill="none" className="shrink-0">
          <path d="M16 2C7 5 7 27 16 30M16 2c5 1 7 5 7 8M16 30c5-1 7-5 7-8" stroke={G} strokeWidth="1.8" />
          <path d="M6 16H2m0 0l3-3m-3 3l3 3M26 16h4" stroke={G} strokeWidth="1.8" />
          <path d="M16 13v6M13 16h6" stroke="#2f88d0" strokeWidth="2" />
        </svg>
        <Caret className="ml-[9px] border-x-[6px] border-t-[9px]" />
        <span className="ml-[10px] text-[23.27px] font-bold text-[#111111]">3DORBIT</span>
      </div>
    </div>
  </div>
);

const StatusBar = () => (
  <div className="h-[59px] bg-[#d9d9d9] border-b-[3px] border-[#bdbdbd] flex items-start pl-[32px] shrink-0 text-[23px] text-[#3c3c3c] whitespace-nowrap">
    <div className="mt-[13px]"><Burger /></div>
    <div className="ml-[18px] h-[48px] w-[140px] bg-[#f5f5f5] [clip-path:polygon(18px_0,100%_0,calc(100%_-_17px)_100%,0_100%)] flex items-center pl-[34px] font-bold">
      Model
    </div>
    <span className="ml-[15px] h-[48px] flex items-center tracking-[-0.3px]">Layout1</span>
    <Slash className="ml-[16px] mt-[9px]" />
    <PlusSign className="ml-[29px] mt-[9px]" />
    <Slash className="ml-[26px] mt-[9px]" />
    <div className="ml-auto mt-[4px] w-[739px] h-[48px] bg-[#f3f3f3] flex items-center justify-center text-[24px] tracking-[-0.15px]">
      Press ESC or ENTER to exit, or right-click to display shortcut-menu.
    </div>
    <div className="ml-[4px] mr-[3px] mt-[4px] w-[49px] h-[48px] bg-[#f3f3f3] flex items-center justify-center">
      <Burger />
    </div>
  </div>
);

export default function App() {
  return (
    <div className="w-[2560px] h-[1530px] overflow-hidden flex flex-col bg-[#eeeeee] font-['Open_Sans',sans-serif]">
      <TitleBar />
      <TabBar />
      <Ribbon />
      <DocBar />
      <div className="h-[1091px] bg-[#f5f5f5] flex shrink-0">
        <ToolPalette />
        <div className="flex-1 min-w-0 pt-[9px]">
          <ViewportPane />
          <CommandPane />
        </div>
      </div>
      <StatusBar />
    </div>
  );
}
